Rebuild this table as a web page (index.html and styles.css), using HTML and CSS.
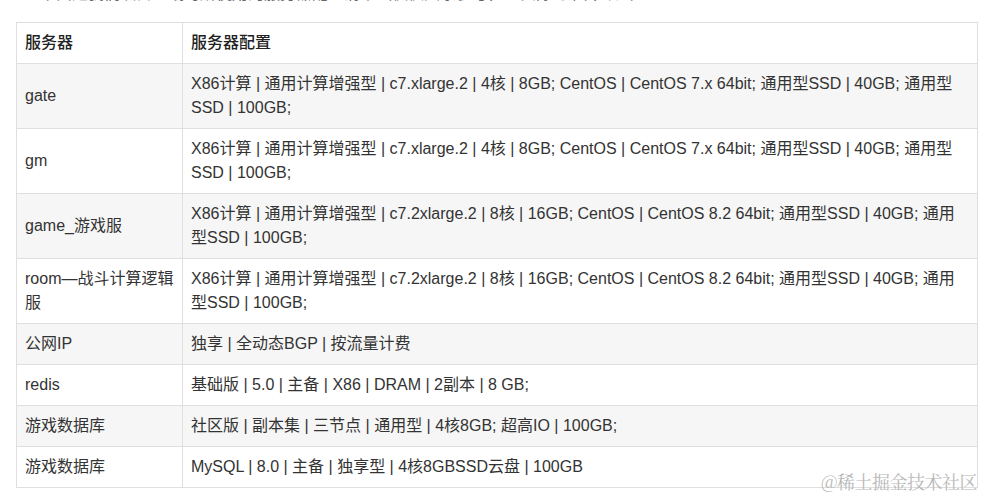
FILE: index.html
```html
<!DOCTYPE html>
<html lang="zh-CN">
<head>
<meta charset="utf-8">
<title>服务器配置</title>
<link rel="stylesheet" href="styles.css">
</head>
<body>
<div class="page">
  <p class="intro">下面是我们项目上线时所使用的服务器配置清单（仅供大家参考，以实际为准），如下：</p>
  <table class="spec">
    <thead>
      <tr><th class="c1">服务器</th><th>服务器配置</th></tr>
    </thead>
    <tbody>
      <tr><td>gate</td><td>X86计算 | 通用计算增强型 | c7.xlarge.2 | 4核 | 8GB; CentOS | CentOS 7.x 64bit; 通用型SSD | 40GB; 通用型SSD | 100GB;</td></tr>
      <tr><td>gm</td><td>X86计算 | 通用计算增强型 | c7.xlarge.2 | 4核 | 8GB; CentOS | CentOS 7.x 64bit; 通用型SSD | 40GB; 通用型SSD | 100GB;</td></tr>
      <tr><td>game_游戏服</td><td>X86计算 | 通用计算增强型 | c7.2xlarge.2 | 8核 | 16GB; CentOS | CentOS 8.2 64bit; 通用型SSD | 40GB; 通用型SSD | 100GB;</td></tr>
      <tr><td>room—战斗计算逻辑服</td><td>X86计算 | 通用计算增强型 | c7.2xlarge.2 | 8核 | 16GB; CentOS | CentOS 8.2 64bit; 通用型SSD | 40GB; 通用型SSD | 100GB;</td></tr>
      <tr><td>公网IP</td><td>独享 | 全动态BGP | 按流量计费</td></tr>
      <tr><td>redis</td><td>基础版 | 5.0 | 主备 | X86 | DRAM | 2副本 | 8 GB;</td></tr>
      <tr><td>游戏数据库</td><td>社区版 | 副本集 | 三节点 | 通用型 | 4核8GB; 超高IO | 100GB;</td></tr>
      <tr><td>游戏数据库</td><td>MySQL | 8.0 | 主备 | 独享型 | 4核8GBSSD云盘 | 100GB</td></tr>
    </tbody>
  </table>
  <div class="watermark">@稀土掘金技术社区</div>
</div>
</body>
</html>
```
FILE: styles.css
```css
html, body {
  margin: 0;
  padding: 0;
  background: #ffffff;
}
body {
  font-family: "Liberation Sans", "Noto Sans CJK SC", sans-serif;
  font-size: 16px;
  color: #333333;
  overflow: hidden;
}
.page {
  position: relative;
  display: flow-root;
  width: 985px;
  height: 497px;
  padding: 0 8px 0 16px;
  box-sizing: border-box;
}
.intro {
  margin: -18px 0 0 24px;
  line-height: 24px;
  height: 24px;
  color: #666;
  white-space: nowrap;
}
.spec {
  margin-top: 16px;
  width: 962px;
  border-collapse: collapse;
  line-height: 24px;
}
.spec th, .spec td {
  border: 1px solid #dfdfdf;
  padding: 8px;
  text-align: left;
  vertical-align: middle;
}
.spec th {
  font-weight: 500;
  color: #222;
}
.spec .c1 {
  width: 149px;
}
.spec tbody tr:nth-child(odd) {
  background: #f6f6f6;
}
.watermark {
  position: absolute;
  right: 8px;
  bottom: 5px;
  font-family: "Noto Serif CJK SC", "Noto Sans CJK SC", serif;
  font-size: 18px;
  color: #b8b8b8;
  line-height: 22px;
  letter-spacing: -0.5px;
}
```
